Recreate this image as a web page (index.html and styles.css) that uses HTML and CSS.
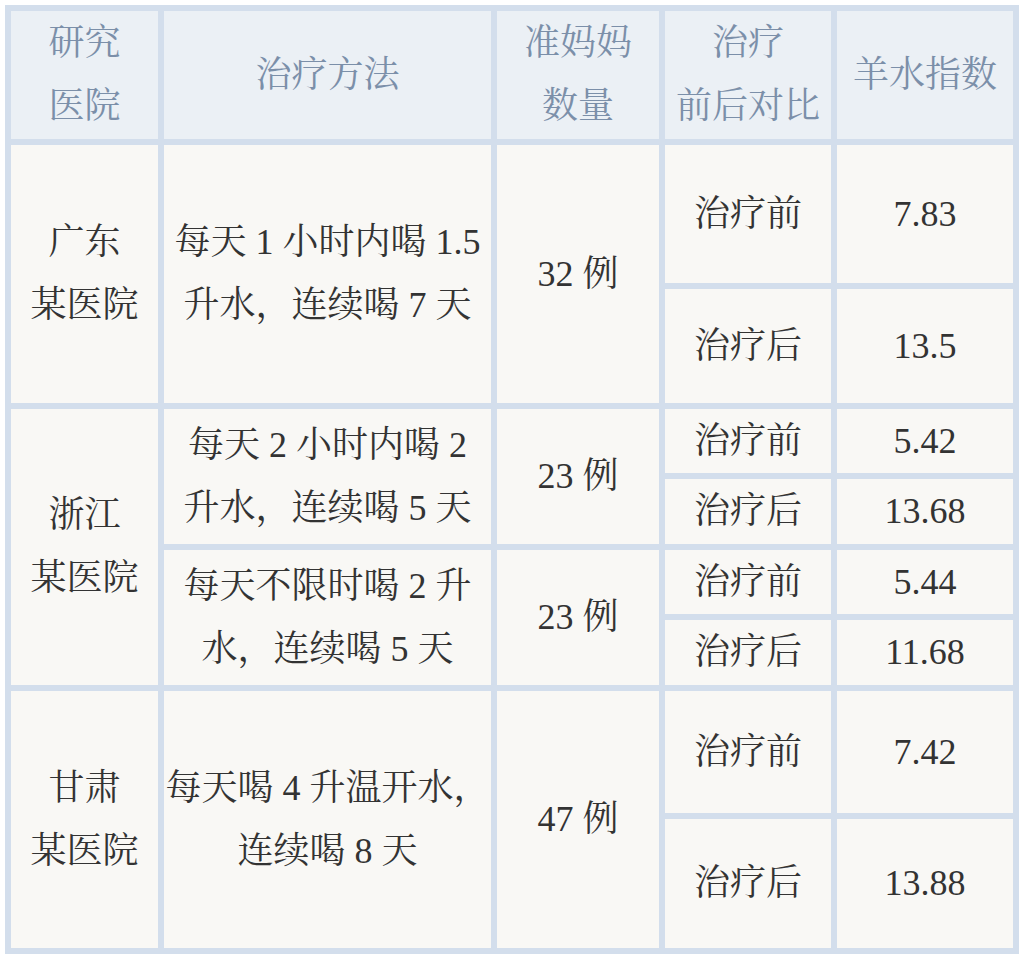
FILE: index.html
```html
<!DOCTYPE html>
<html lang="zh-CN">
<head>
<meta charset="utf-8">
<title>饮水与羊水指数</title>
<link rel="stylesheet" href="styles.css">
</head>
<body>
<div class="table">
  <div class="cell head">研究<br>医院</div>
  <div class="cell head">治疗方法</div>
  <div class="cell head">准妈妈<br>数量</div>
  <div class="cell head">治疗<br>前后对比</div>
  <div class="cell head">羊水指数</div>

  <div class="cell span2">广东<br>某医院</div>
  <div class="cell span2">每天 1 小时内喝 1.5<br>升水，连续喝 7 天</div>
  <div class="cell span2">32 例</div>
  <div class="cell">治疗前</div>
  <div class="cell">7.83</div>
  <div class="cell">治疗后</div>
  <div class="cell">13.5</div>

  <div class="cell span4">浙江<br>某医院</div>
  <div class="cell span2">每天 2 小时内喝 2<br>升水，连续喝 5 天</div>
  <div class="cell span2">23 例</div>
  <div class="cell">治疗前</div>
  <div class="cell">5.42</div>
  <div class="cell">治疗后</div>
  <div class="cell">13.68</div>
  <div class="cell span2">每天不限时喝 2 升<br>水，连续喝 5 天</div>
  <div class="cell span2">23 例</div>
  <div class="cell">治疗前</div>
  <div class="cell">5.44</div>
  <div class="cell">治疗后</div>
  <div class="cell">11.68</div>

  <div class="cell span2">甘肃<br>某医院</div>
  <div class="cell span2">每天喝 4 升温开水，<br>连续喝 8 天</div>
  <div class="cell span2">47 例</div>
  <div class="cell">治疗前</div>
  <div class="cell">7.42</div>
  <div class="cell">治疗后</div>
  <div class="cell">13.88</div>
</div>
</body>
</html>
```
FILE: styles.css
```css
html, body {
  margin: 0;
  padding: 0;
  background: #ffffff;
}

body {
  padding: 5px;
}

.table {
  width: 1014px;
  box-sizing: border-box;
  display: grid;
  grid-template-columns: 147px 327px 162px 166px 176px;
  grid-template-rows: 128px 138px 114px 64px 65px 64px 65px 122px 129px;
  gap: 6px;
  padding: 6px;
  background: #d3deec;
  font-family: "Liberation Serif", "Noto Serif CJK SC", "Noto Sans CJK SC", serif;
  font-size: 36px;
  line-height: 63px;
  color: #333333;
}

.cell {
  background: #f9f8f5;
  display: flex;
  align-items: center;
  justify-content: center;
  text-align: center;
  white-space: nowrap;
}

.head {
  background: #ebf0f5;
  color: #7b8fa9;
}

.span2 {
  grid-row: span 2;
}

.span4 {
  grid-row: span 4;
}
```
